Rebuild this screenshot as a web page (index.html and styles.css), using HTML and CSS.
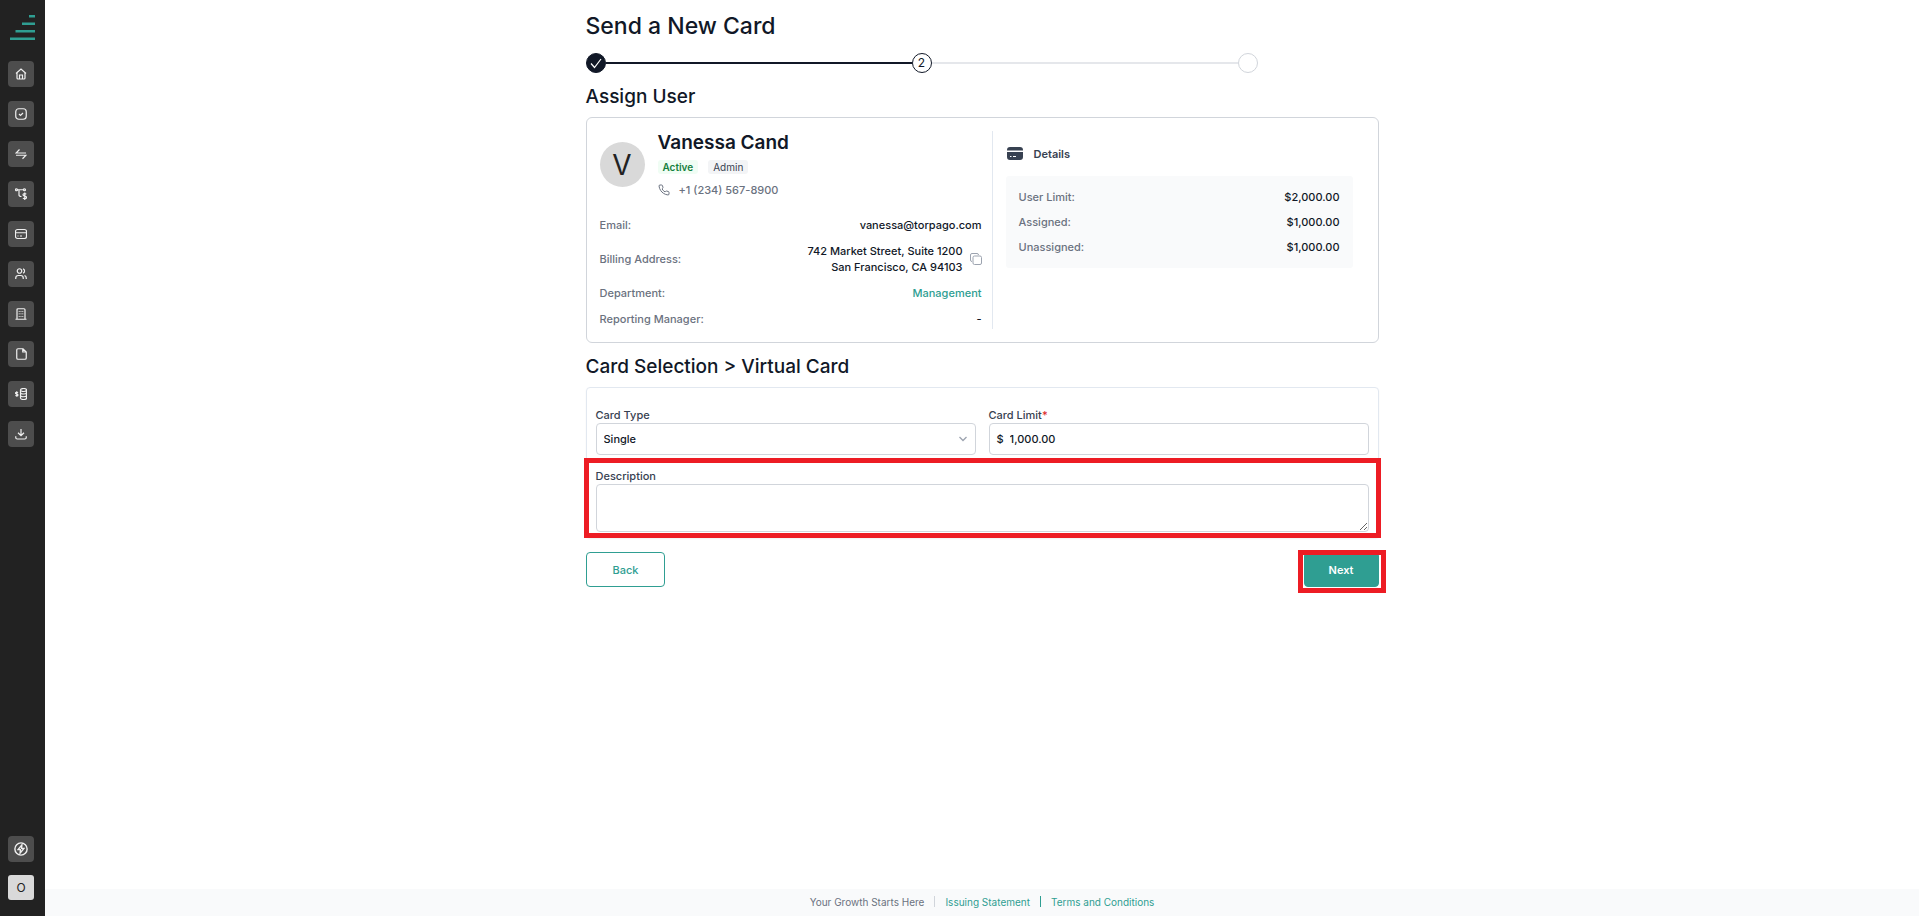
FILE: index.html
```html
<!DOCTYPE html>
<html lang="en">
<head>
<meta charset="utf-8">
<meta name="viewport" content="width=device-width, initial-scale=1">
<title>Send a New Card</title>
<link rel="stylesheet" href="styles.css">
</head>
<body>
<aside class="sidebar">
  <a class="logo" href="#" aria-label="Home page">
    <svg width="26" height="26" viewBox="0 0 26 26" fill="#2f9e92"><path d="M19 0h6v2.400h-6zM12 7.600h13V10H12zM5.500 15h19.500v2.400H5.500zM0 22.600h25V25H0z"/></svg>
  </a>
  <nav class="nav" aria-label="Main">
    <a class="nav-item" href="#" aria-label="Home"><svg viewBox="0 0 24 24"><path d="M2 11 12 2l10 9M4 9.500V20q0 2 2 2h12q2 0 2-2V9.500M9 22v-8h6v8"/></svg></a>
    <a class="nav-item" href="#" aria-label="Approvals"><svg viewBox="0 0 24 24"><rect x="1.500" y="1.500" width="21" height="21" rx="6"/><path d="m8 12 3 3 5-5"/></svg></a>
    <a class="nav-item" href="#" aria-label="Transactions"><svg viewBox="0 0 24 24"><path d="M22 10H2l7-7M2 14.500h20l-7 7"/></svg></a>
    <a class="nav-item" href="#" aria-label="Spend rules"><svg viewBox="0 0 24 24"><circle cx="3" cy="3.500" r="2"/><circle cx="19" cy="3.500" r="2"/><path d="M5 3.500h12M8 3.500V14q0 3 5 3M22.500 12.500q-1-1.500-3-1.500-3.500 0-3.500 2.500 0 2.200 3.500 2.700 3.500.5 3.500 2.800 0 2.500-3.500 2.500-2.500 0-3.500-1.500M19.500 9v15"/></svg></a>
    <a class="nav-item" href="#" aria-label="Cards"><svg viewBox="0 0 24 24"><rect x="1" y="3" width="22" height="18" rx="4"/><path d="M1 9.500h22M5 16h2M10 16h4"/></svg></a>
    <a class="nav-item" href="#" aria-label="Users"><svg viewBox="0 0 24 24"><circle cx="9" cy="6" r="4.500"/><path d="M1.500 22v-2q0-5 5-5h5q5 0 5 5v2M16 1.700a4.500 4.500 0 0 1 0 8.600M19 15q3.500 1 3.500 5v2"/></svg></a>
    <a class="nav-item" href="#" aria-label="Company"><svg viewBox="0 0 24 24"><path d="M1 22.500h22M4 22V3.500Q4 1.500 6 1.500h12q2 0 2 2V22M8.500 6v1.500M12 6v1.500M15.500 6v1.500M8.500 11v1.500M12 11v1.500M15.500 11v1.500M8.500 16v1.500M15.500 16v1.500M12 16v1.500"/></svg></a>
    <a class="nav-item" href="#" aria-label="Documents"><svg viewBox="0 0 24 24"><path d="M16 1.500H6q-2.500 0-2.500 2.500v16q0 2.500 2.500 2.500h14q2.500 0 2.500-2.500V8zM15.500 1.500V8h7"/></svg></a>
    <a class="nav-item" href="#" aria-label="Funds"><svg viewBox="0 0 24 24"><ellipse cx="17" cy="4" rx="6" ry="3"/><path d="M11 4v16c0 4 12 4 12 0V4M11 9c0 4 12 4 12 0M11 14.500c0 4 12 4 12 0M6 9.500q-1-1-2.500-1Q1 8.500 1 10.300q0 1.500 2.500 1.700 2.500.3 2.500 2 0 1.800-2.500 1.800Q2 15.800 1 14.500M3.500 6.500v11"/></svg></a>
    <a class="nav-item" href="#" aria-label="Downloads"><svg viewBox="0 0 24 24"><path d="M12 2v13M6 9.500l6 6 6-6M1.500 16.500V19q0 3 3 3h15q3 0 3-3v-2.500"/></svg></a>
  </nav>
  <div class="nav-bottom">
    <a class="nav-item" href="#" aria-label="Quick actions"><svg class="bolt" viewBox="0 0 24 24"><circle cx="12" cy="12" r="10.500"/><path d="M13.500 5 7 13h4l-.5 6L17 11h-4z"/></svg></a>
    <button class="account" type="button">O</button>
  </div>
</aside>

<div class="page">
  <main class="content">
    <h1 class="title">Send a New Card</h1>
    <ol class="stepper">
      <li class="step step-done" aria-label="Step 1 complete"><svg width="18" height="18" viewBox="0 0 18 18" fill="none" stroke="#fff"><path d="m4 9.500 3.500 4L14 5" stroke-width="1.200"/></svg></li>
      <li class="track track-done" role="presentation"></li>
      <li class="step step-current">2</li>
      <li class="track" role="presentation"></li>
      <li class="step" aria-label="Step 3"></li>
    </ol>

    <h2 class="heading">Assign User</h2>
    <section class="user-card">
      <div class="user-info">
        <div class="user-head">
          <div class="avatar">V</div>
          <div class="identity">
            <h3 class="name">Vanessa Cand</h3>
            <div class="badges"><span class="badge badge-active">Active</span><span class="badge">Admin</span></div>
            <div class="phone"><svg width="12" height="12" viewBox="0 0 24 24" fill="none" stroke="currentColor" stroke-width="2"><path d="M22 16.900v3a2 2 0 0 1-2.200 2 19.800 19.800 0 0 1-8.600-3.100 19.500 19.500 0 0 1-6-6A19.800 19.800 0 0 1 2.100 4.200 2 2 0 0 1 4.100 2h3a2 2 0 0 1 2 1.700c.1 1 .4 1.900.7 2.800a2 2 0 0 1-.4 2.100L8.100 9.900a16 16 0 0 0 6 6l1.300-1.300a2 2 0 0 1 2.100-.4c.9.300 1.800.6 2.800.7a2 2 0 0 1 1.700 2z"/></svg><span>+1 (234) 567-8900</span></div>
          </div>
        </div>
        <dl class="rows">
          <div class="row"><dt>Email:</dt><dd>vanessa@torpago.com</dd></div>
          <div class="row"><dt>Billing Address:</dt><dd class="address"><span>742 Market Street, Suite 1200<br>San Francisco, CA 94103</span><button class="copy" type="button" aria-label="Copy address"><svg width="12" height="12" viewBox="0 0 12 12" fill="none" stroke="#9ca3af"><rect x="3" y="3" width="8.500" height="8.500" rx="1.500"/><path d="M2 8.500Q.5 8.500.5 7V2Q.5.500 2 .5h5Q8.500.500 8.500 2"/></svg></button></dd></div>
          <div class="row"><dt>Department:</dt><dd><a class="link" href="#">Management</a></dd></div>
          <div class="row"><dt>Reporting Manager:</dt><dd>-</dd></div>
        </dl>
      </div>
      <div class="limits">
        <h3 class="details-title"><svg width="18" height="14" viewBox="0 0 18 14"><path fill="#374151" d="M1 3q0-3 3-3h10q3 0 3 3v.5H1zM1 5h16v5q0 3-3 3H4q-3 0-3-3z"/><path stroke="#fff" d="M4 9.500h1.500M7 9.500h3"/></svg>Details</h3>
        <dl class="rows limit-rows">
          <div class="row"><dt>User Limit:</dt><dd>$2,000.00</dd></div>
          <div class="row"><dt>Assigned:</dt><dd>$1,000.00</dd></div>
          <div class="row"><dt>Unassigned:</dt><dd>$1,000.00</dd></div>
        </dl>
      </div>
    </section>

    <h2 class="heading">Card Selection &gt; Virtual Card</h2>
    <form>
      <div class="form-card">
        <div class="field">
          <label for="card-type">Card Type</label>
          <div class="select-wrap">
            <select id="card-type" class="control"><option>Single</option></select>
            <svg class="chevron" width="10" height="6" viewBox="0 0 10 6" fill="none" stroke="#9ca3af"><path stroke-width="1.300" d="m1.500 1 3.500 3.500L8.500 1"/></svg>
          </div>
        </div>
        <div class="field">
          <label for="card-limit">Card Limit<span class="required">*</span></label>
          <div class="control money"><span>$</span><input id="card-limit" type="text" value="1,000.00"></div>
        </div>
        <div class="field field-wide">
          <label for="description">Description</label>
          <textarea id="description" class="control description"></textarea>
        </div>
        <span class="marker marker-field"></span>
      </div>
      <div class="actions">
        <button class="button" type="button">Back</button>
        <div class="next-wrap"><button class="button button-primary" type="submit">Next</button><span class="marker marker-next"></span></div>
      </div>
    </form>
  </main>
  <footer class="footer">
    <span>Your Growth Starts Here</span><span class="bar"></span><a href="#">Issuing Statement</a><span class="bar bar-green"></span><a href="#">Terms and Conditions</a>
  </footer>
</div>
</body>
</html>
```
FILE: styles.css
```css
* { box-sizing: border-box; }

body {
  margin: 0;
  display: flex;
  min-height: 100vh;
  background: #fff;
  color: #111827;
  font: 500 11px/16px Inter, "Liberation Sans", sans-serif;
}

h1, h2, h3, dl, dd, ol { margin: 0; padding: 0; }
button, input, select, textarea { font: inherit; color: inherit; }
a { color: #2f9e92; text-decoration: none; }
svg { display: block; flex: none; }

/* Sidebar */
.sidebar {
  flex: none;
  width: 45px;
  padding: 15px 0 16px 8px;
  display: flex;
  flex-direction: column;
  background: #222;
}
.logo { padding-left: 2px; }
.nav, .nav-bottom { display: flex; flex-direction: column; gap: 14px; }
.nav { margin-top: 20px; }
.nav-bottom { margin-top: auto; gap: 13px; }
.nav-item, .account {
  width: 26px;
  height: 26px;
  display: grid;
  place-items: center;
  border-radius: 4px;
  background: #4d4d4d;
}
.nav-item svg {
  width: 12px;
  height: 12px;
  fill: none;
  stroke: #f0f0f0;
  stroke-width: 2.4;
}
.nav-item .bolt { width: 14px; height: 14px; }
.account {
  height: 25px;
  padding: 0;
  border: 0;
  border-radius: 3px;
  background: #d9d9d9;
  color: #222;
  font-size: 12px;
  font-weight: 400;
}

/* Page */
.page { flex: 1; display: flex; flex-direction: column; min-width: 0; }
.content { flex: 1; width: 100%; max-width: 793px; margin: 0 auto; padding-top: 10px; }
.title { font-size: 23px; line-height: 32px; font-weight: 500; }
.heading { margin: 10px 0 6px; font-size: 19px; line-height: 28px; font-weight: 500; }

/* Stepper */
.stepper {
  display: flex;
  align-items: center;
  max-width: 672px;
  margin-top: 11px;
  list-style: none;
}
.step {
  flex: none;
  width: 20px;
  height: 20px;
  display: grid;
  place-items: center;
  border: 1px solid #d1d5db;
  border-radius: 50%;
  font-size: 12px;
  font-weight: 400;
}
.step-done { background: #111827; border-color: #111827; }
.step-current { border-color: #111827; }
.track { flex: 1; height: 2px; background: #e5e7eb; }
.track-done { background: #111827; }

/* User card */
.user-card {
  display: grid;
  grid-template-columns: 393fr 372fr;
  padding: 13px;
  border: 1px solid #d1d5db;
  border-radius: 6px;
}
.user-info { padding: 0 10px 2px 0; border-right: 1px solid #e2e8f0; }
.user-head { display: flex; align-items: center; gap: 13px; }
.avatar {
  width: 45px;
  height: 45px;
  display: grid;
  place-items: center;
  border-radius: 50%;
  background: #d9d9d9;
  color: #222;
  font-size: 28px;
  font-weight: 400;
}
.name { font-size: 19px; line-height: 24px; font-weight: 600; }
.badges { display: flex; gap: 10px; margin: 5px 0 8px; }
.badge {
  padding: 0 5px;
  border-radius: 3px;
  background: #f3f4f6;
  color: #374151;
  font-size: 10px;
  line-height: 14px;
  font-weight: 400;
}
.badge-active { background: #f0fdf4; color: #15803d; font-weight: 600; }
.phone { display: flex; align-items: center; gap: 9px; color: #6b7280; }
.rows { display: flex; flex-direction: column; gap: 10px; }
.user-info .rows { margin-top: 19px; }
.row { display: flex; justify-content: space-between; align-items: center; }
.row dt { color: #6b7280; }
.row dd { text-align: right; }
.address { display: flex; align-items: center; gap: 7px; }
.copy { padding: 0; border: 0; background: none; }
.limits { padding: 13px 12px 0 13px; }
.details-title {
  display: flex;
  align-items: center;
  gap: 10px;
  margin-bottom: 12px;
  color: #374151;
  font-size: 11px;
  line-height: 20px;
  font-weight: 600;
}
.limit-rows { gap: 9px; padding: 13px; border-radius: 3px; background: #f9fafb; }

/* Form */
.form-card {
  position: relative;
  display: grid;
  grid-template-columns: 1fr 1fr;
  gap: 13px;
  padding: 19px 9px 5px;
  border: 1px solid #e2e8f0;
  border-radius: 4px;
  box-shadow: 0 1px 2px rgba(0, 0, 0, 0.06);
}
.field { display: flex; flex-direction: column; min-width: 0; color: #374151; }
.field-wide { grid-column: 1 / -1; }
.required { color: #dc2626; }
.control {
  width: 100%;
  height: 32px;
  padding: 0 7px;
  border: 1px solid #d1d5db;
  border-radius: 4px;
  background: #fff;
  color: #111827;
}
.select-wrap { position: relative; }
select.control { appearance: none; }
.chevron { position: absolute; right: 8px; top: 13px; pointer-events: none; }
.money { display: flex; align-items: center; gap: 6px; }
.money input { flex: 1; min-width: 0; padding: 0; border: 0; background: none; outline: 0; }
.description { height: 48px; resize: vertical; }

/* Actions */
.actions { display: flex; justify-content: space-between; margin-top: 14px; }
.button {
  display: block;
  height: 35px;
  padding: 0 26px;
  border: 1px solid #2f9e92;
  border-radius: 4px;
  background: #fff;
  color: #2f9e92;
}
.button-primary { padding: 0 24px; background: #2f9e92; color: #fff; font-weight: 600; }
.next-wrap { position: relative; }

/* Red callouts over the form */
.marker { position: absolute; border: 5px solid #ed1c24; pointer-events: none; }
.marker-field { top: 70px; right: -3px; bottom: -1px; left: -3px; }
.marker-next { top: -2px; right: -7px; bottom: -6px; left: -6px; }

/* Footer */
.footer {
  display: flex;
  justify-content: center;
  align-items: center;
  gap: 10px;
  height: 27px;
  padding-bottom: 2px;
  background: #f9fafb;
  color: #6b7280;
  font-size: 10px;
  font-weight: 400;
}
.bar { width: 1px; height: 11px; background: #d1d5db; }
.bar-green { background: #2f9e92; }
```
